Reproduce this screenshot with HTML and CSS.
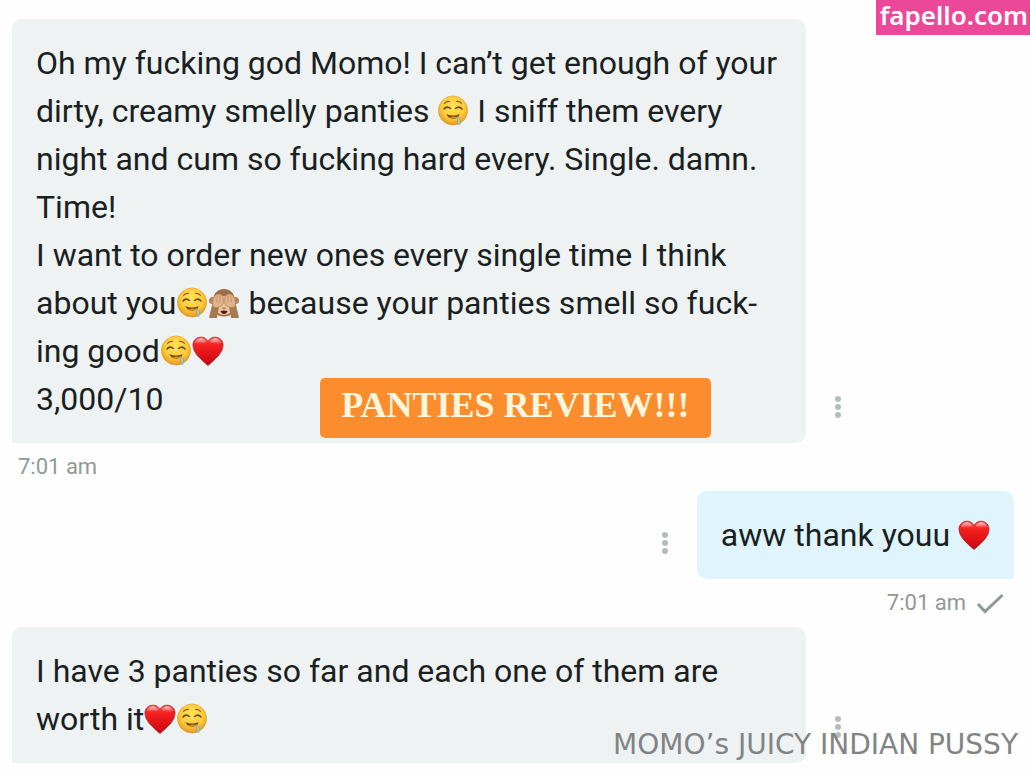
FILE: index.html
```
<!DOCTYPE html>
<html lang="en">
<head>
    <meta charset="UTF-8">
    <meta name="viewport" content="width=device-width, initial-scale=1.0">
    <title>Messages</title>
    <link rel="stylesheet" href="styles.css">
</head>
<body>
    <!-- Emoji shapes, reused in the messages -->
    <svg class="sprite" aria-hidden="true">
        <defs>
            <radialGradient id="skin" cx="50%" cy="38%" r="64%">
                <stop offset="0" stop-color="#ffe45a"/>
                <stop offset="0.6" stop-color="#fbcb3a"/>
                <stop offset="1" stop-color="#e3921b"/>
            </radialGradient>
            <linearGradient id="red" x1="0" y1="0" x2="0" y2="1">
                <stop offset="0" stop-color="#ff4a45"/>
                <stop offset="0.3" stop-color="#f4201d"/>
                <stop offset="1" stop-color="#c90512"/>
            </linearGradient>
            <linearGradient id="shine" x1="0" y1="0" x2="0" y2="1">
                <stop offset="0" stop-color="#fff" stop-opacity="0.7"/>
                <stop offset="1" stop-color="#fff" stop-opacity="0"/>
            </linearGradient>
            <symbol id="drool" viewBox="0 0 32 32">
                <circle cx="16" cy="15.5" r="14.6" fill="url(#skin)" stroke="#d98f20" stroke-width="0.5"/>
                <path d="M7.500 8.500Q9.500 6 12.500 6.500M19.500 6.500Q22.500 6 24.500 8.500" fill="none" stroke="#94621a" stroke-width="1.200" stroke-linecap="round"/>
                <path d="M7 14Q10 10.500 13.500 13.500M18.500 13.500Q22 10.500 25 14" fill="none" stroke="#704810" stroke-width="1.600" stroke-linecap="round"/>
                <path d="M9.500 19Q16 22 22.500 19Q22 23.500 16.300 23.700Q11 23.500 9.500 19Z" fill="#7a4a0e"/>
                <path d="M13 22.400Q16.500 20.800 20 22.400Q16.500 24.200 13 22.400Z" fill="#d98a3c"/>
                <path d="M19.500 22Q22 20.500 23 23.500Q24.500 27.500 22.500 29.500Q19.800 29.800 20.500 26.500Q20.800 24 19.500 22Z" fill="#b5c4a8" fill-opacity="0.85" stroke="#8a9c85" stroke-width="0.6"/>
            </symbol>
            <symbol id="monkey" viewBox="0 0 32 32">
                <circle cx="4.500" cy="13.500" r="3.500" fill="#b98459"/>
                <circle cx="27.500" cy="13.500" r="3.500" fill="#b98459"/>
                <path d="M16 2C23 2 27 7 27 14Q28 25 21.500 28.500Q16 30.500 10.500 28.500Q4 25 5 14C5 7 9 2 16 2Z" fill="#9b6d49"/>
                <path d="M16 9Q25 8 25 18Q24 28 16 28Q8 28 7 18Q7 8 16 9Z" fill="#edc39b"/>
                <path d="M1 31L4.500 16L11 19L9 31Z" fill="#a97a52"/>
                <path d="M31 31L27.500 16L21 19L23 31Z" fill="#a97a52"/>
                <path d="M4.500 18Q4 11 7.500 8Q12 5.500 15 9.500L15.400 16Q14 20 9.500 20.500Q5 21 4.500 18Z" fill="#e0b48b" stroke="#b07e57" stroke-width="0.7"/>
                <path d="M27.500 18Q28 11 24.500 8Q20 5.500 17 9.500L16.600 16Q18 20 22.500 20.500Q27 21 27.500 18Z" fill="#e0b48b" stroke="#b07e57" stroke-width="0.7"/>
                <path d="M8.500 15L9.500 8.500M11.800 15.500L12.300 8.500M23.500 15L22.500 8.500M20.200 15.500L19.700 8.500" stroke="#bd8d66" stroke-width="0.8"/>
                <path d="M14.800 21.200H17.200" stroke="#7d5438" stroke-width="1" stroke-linecap="round"/>
                <path d="M12.500 24Q16 22.800 19.500 24Q18.500 27 16 27Q13.500 27 12.500 24Z" fill="#4d1c17"/>
            </symbol>
            <symbol id="heart" viewBox="0 0 32 32">
                <path d="M16 30.500C10 25 1 18.500 1 10C1 2 12 -1 16 6.500C20 -1 31 2 31 10C31 18.500 22 25 16 30.500Z" fill="url(#red)" stroke="#a80c16" stroke-width="0.7"/>
                <path d="M3 8C4.500 2 12 2 14.500 7C11 9 6 9.500 3 8ZM29 8C27.500 2 20 2 17.500 7C21 9 26 9.500 29 8Z" fill="url(#shine)"/>
            </symbol>
            <symbol id="dots" viewBox="0 0 16 24">
                <circle cx="8" cy="4" r="3"/>
                <circle cx="8" cy="12" r="3"/>
                <circle cx="8" cy="20" r="3"/>
            </symbol>
        </defs>
    </svg>

    <a class="site-badge" href="#">fapello.com</a>

    <main class="chat">
        <article class="message">
            <div class="row">
                <div class="bubble">
                    <p>Oh my fucking god Momo! I can’t get enough of your dirty, creamy smelly panties <svg class="emoji" role="img" aria-label="drooling face"><use href="#drool"/></svg> I sniff them every night and cum so fucking hard every. Single. damn. Time!</p>
                    <p>I want to order new ones every single time I think about you<svg class="emoji" role="img" aria-label="drooling face"><use href="#drool"/></svg><svg class="emoji" role="img" aria-label="see no evil monkey"><use href="#monkey"/></svg> because your panties smell so fuck&shy;ing good<svg class="emoji" role="img" aria-label="drooling face"><use href="#drool"/></svg><svg class="emoji" role="img" aria-label="red heart"><use href="#heart"/></svg></p>
                    <p>3,000/10</p>
                    <strong class="sticker">PANTIES REVIEW!!!</strong>
                </div>
                <button class="more" type="button" aria-label="More"><svg><use href="#dots"/></svg></button>
            </div>
            <div class="meta"><time>7:01 am</time></div>
        </article>

        <article class="message own">
            <div class="row">
                <div class="bubble">
                    <p>aww thank youu <svg class="emoji" role="img" aria-label="red heart"><use href="#heart"/></svg></p>
                </div>
                <button class="more" type="button" aria-label="More"><svg><use href="#dots"/></svg></button>
            </div>
            <div class="meta">
                <time>7:01 am</time>
                <svg class="check" viewBox="0 0 28 22" role="img" aria-label="Sent"><path d="M2 12L9 19.500L26.500 3"/></svg>
            </div>
        </article>

        <article class="message">
            <div class="row">
                <div class="bubble">
                    <p>I have 3 panties so far and each one of them are worth it<svg class="emoji" role="img" aria-label="red heart"><use href="#heart"/></svg><svg class="emoji" role="img" aria-label="drooling face"><use href="#drool"/></svg></p>
                </div>
                <button class="more" type="button" aria-label="More"><svg><use href="#dots"/></svg></button>
            </div>
        </article>
    </main>

    <div class="watermark">MOMO’s JUICY INDIAN PUSSY</div>
</body>
</html>
```
FILE: styles.css
```
body {
    margin: 0;
    position: relative;
    background-color: #fefefe;
    color: #1a1f22;
    font-family: Roboto, sans-serif;
    font-size: 32px;
    line-height: 48px;
}
.sprite {
    position: absolute;
    width: 0;
    height: 0;
}
.chat {
    padding: 19px 16px 11px 12px;
}
.row {
    display: flex;
    align-items: flex-end;
}
.bubble {
    position: relative;
    box-sizing: border-box;
    max-width: 79.2%;
    padding: 20px 24px;
    background-color: #eef2f3;
    border-radius: 10px 10px 10px 0;
}
.bubble p {
    margin: 0;
}
.own .row {
    flex-direction: row-reverse;
}
.own .bubble {
    background-color: #e0f4fc;
    border-radius: 10px 10px 4px 10px;
}
.emoji {
    width: 32px;
    height: 32px;
    vertical-align: -5px;
}
.more {
    flex: none;
    width: 16px;
    height: 24px;
    margin: 0 24px 24px;
    padding: 0;
    border: 0;
    background: none;
    fill: #b3bdb9;
    cursor: pointer;
}
.more svg {
    display: block;
    width: 16px;
    height: 24px;
}
.meta {
    display: flex;
    align-items: center;
    gap: 10px;
    height: 48px;
    padding: 0 10px 0 6px;
    color: #929897;
    font-size: 22px;
}
.own .meta {
    justify-content: flex-end;
}
.check {
    width: 28px;
    height: 22px;
    fill: none;
    stroke: #929897;
    stroke-width: 3;
}
.sticker {
    position: absolute;
    right: 95px;
    bottom: 5px;
    padding: 3px 21px 9px;
    border-radius: 5px;
    background-color: #fb8d2e;
    color: #fff6dc;
    font-family: "Liberation Serif", serif;
    font-size: 36px;
}
.site-badge {
    position: absolute;
    top: 0;
    right: 0;
    z-index: 1;
    padding: 0 2px 4px 4px;
    background-color: #ec4899;
    color: #fff;
    font-family: "Noto Sans", sans-serif;
    font-size: 26px;
    font-weight: 600;
    line-height: 31px;
    text-decoration: none;
}
.watermark {
    position: absolute;
    right: 12px;
    bottom: 13px;
    color: #808483;
    font-family: "DejaVu Sans", sans-serif;
    font-size: 28px;
    line-height: 32px;
}
```
